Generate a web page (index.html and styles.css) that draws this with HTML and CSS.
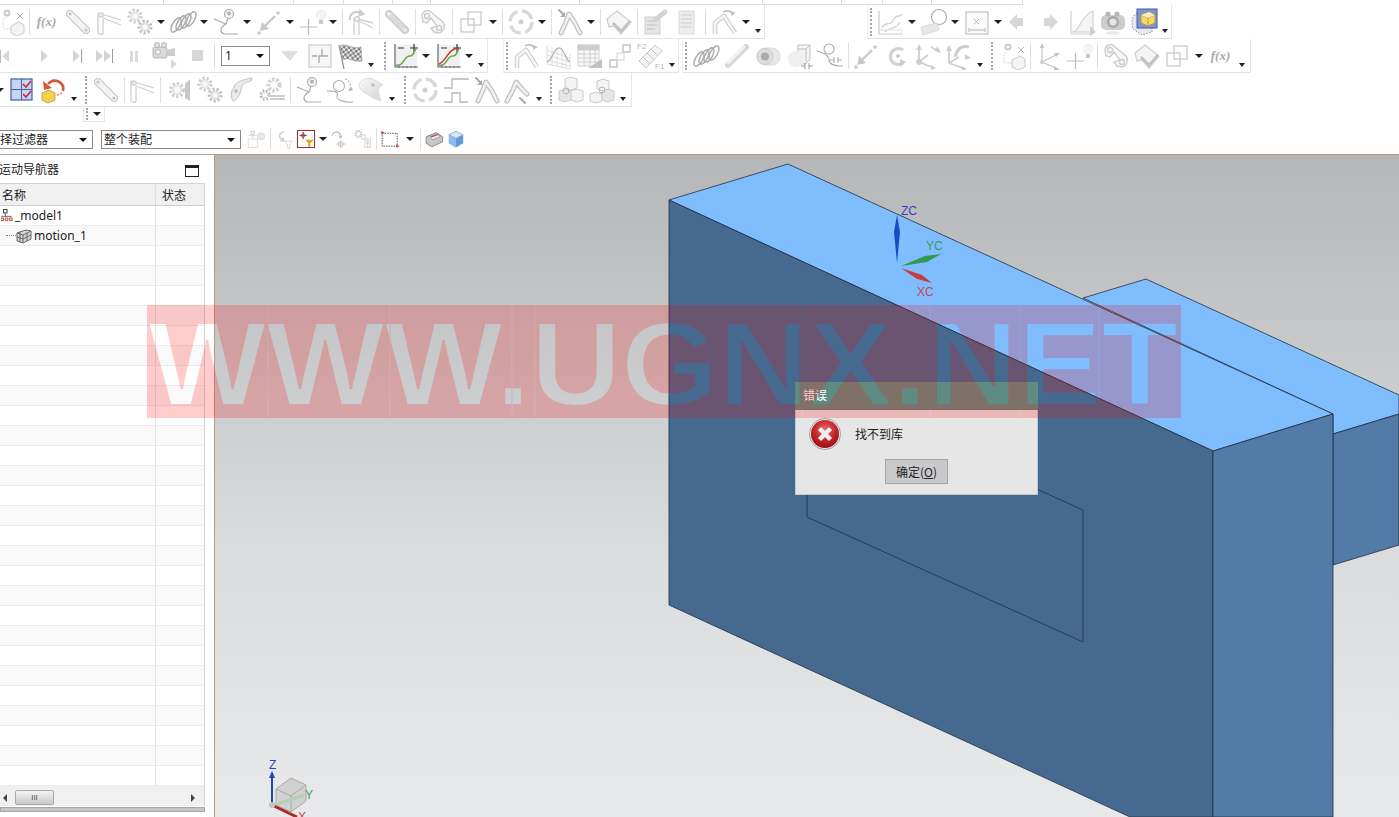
FILE: index.html
```html
<!DOCTYPE html>
<html lang="zh">
<head>
<meta charset="utf-8">
<title>运动导航器</title>
<link rel="stylesheet" href="styles.css">
</head>
<body>
<svg class="defs" aria-hidden="true">
<defs>
<pattern id="chk" width="5" height="5" patternUnits="userSpaceOnUse" patternTransform="rotate(8)"><rect width="5" height="5" fill="#eee"/><rect width="2.5" height="2.5" fill="#777"/><rect x="2.5" y="2.5" width="2.5" height="2.5" fill="#777"/></pattern>
<linearGradient id="gsurf" x1="0" y1="0" x2="1" y2="1"><stop offset="0" stop-color="#f6f6f6"/><stop offset="1" stop-color="#c4c4c4"/></linearGradient>
<radialGradient id="gerr" cx=".5" cy=".35" r=".7"><stop offset="0" stop-color="#e8686a"/><stop offset=".6" stop-color="#c02024"/><stop offset="1" stop-color="#8a0f12"/></radialGradient>
<symbol id="link" viewBox="0 0 28 28"><path d="M6 6L22 22" stroke="#b4b4b4" stroke-width="8" stroke-linecap="round"/><path d="M6 6L22 22" stroke="#efefef" stroke-width="5.5" stroke-linecap="round"/><circle cx="6" cy="6" r="1.5" fill="#aaa"/><circle cx="22" cy="22" r="1.5" fill="#aaa"/></symbol>
<symbol id="linkd" viewBox="0 0 28 28"><path d="M6 6L22 22" stroke="#b8b8b8" stroke-width="8" stroke-linecap="round"/><path d="M6 6L22 22" stroke="#cfcfcf" stroke-width="5" stroke-linecap="round"/><circle cx="6" cy="6" r="1.5" fill="#eee"/><circle cx="22" cy="22" r="1.5" fill="#eee"/></symbol>
<symbol id="strut" viewBox="0 0 28 28" fill="none" stroke="#bcbcbc" stroke-width="1.3"><path d="M3 26V5M8 26V11M3 5L26 12M8 10L26 17M4 26H8"/><circle cx="6" cy="7" r="2.2" fill="#eee"/></symbol>
<symbol id="rotlink" viewBox="0 0 28 28" fill="none" stroke="#bcbcbc" stroke-width="1.3"><path d="M7 27V10M12 27V14M7 10L26 15M12 13L26 20"/><circle cx="10" cy="11" r="2.4" fill="#eee"/><path d="M3 12C2 6 8 2 14 5" stroke-width="2.2"/><path d="M13 2L17 6L12 8Z" fill="#bbb"/></symbol>
<symbol id="gears" viewBox="0 0 28 28" fill="none"><circle cx="9" cy="8" r="5.5" stroke="#bdbdbd" stroke-width="4" stroke-dasharray="2.2 1.6"/><circle cx="9" cy="8" r="3.6" stroke="#ddd" stroke-width="2" fill="#f6f6f6"/><circle cx="19" cy="19" r="5.5" stroke="#adadad" stroke-width="4" stroke-dasharray="2.2 1.6"/><circle cx="19" cy="19" r="3.6" stroke="#d4d4d4" stroke-width="2" fill="#f6f6f6"/></symbol>
<symbol id="spring" viewBox="0 0 28 28" fill="none" stroke="#8e8e8e" stroke-width="1.5"><ellipse cx="7" cy="17" rx="3.5" ry="8" transform="rotate(30 7 17)"/><ellipse cx="12" cy="15" rx="3.5" ry="8" transform="rotate(30 12 15)"/><ellipse cx="17" cy="13" rx="3.5" ry="8" transform="rotate(30 17 13)"/><ellipse cx="22" cy="11" rx="3.5" ry="8" transform="rotate(30 22 11)"/></symbol>
<symbol id="pin" viewBox="0 0 28 28" fill="none" stroke="#8c8c8c" stroke-width="1.2"><circle cx="17" cy="6" r="4.5" fill="#f2f2f2"/><circle cx="17" cy="5.5" r="1.3" fill="#aaa"/><path d="M2 11L14 16C8 19 7 25 13 26H26M16 10L14 16"/></symbol>
<symbol id="arrowp" viewBox="0 0 28 28" fill="none" stroke="#b4b4b4" stroke-width="2.4"><path d="M20 8L9 19"/><path d="M5 23L7 14L14 21Z" fill="#b4b4b4" stroke="none"/><circle cx="23" cy="5" r="1.8" fill="#b4b4b4" stroke="none"/><circle cx="4" cy="25" r="1.8" fill="#b4b4b4" stroke="none"/></symbol>
<symbol id="plusbulb" viewBox="0 0 28 28" fill="none" stroke="#a4a4a4" stroke-width="1.2"><path d="M2 19H19M10.500 11V27"/><circle cx="23" cy="7" r="4.500" fill="#f2f2f2" stroke="#e4e4e4"/><rect x="21" y="12" width="4" height="4" fill="#b4b4b4" stroke="none"/></symbol>
<symbol id="claw" viewBox="0 0 28 28" fill="#f6f6f6" stroke="#bbb" stroke-width="1.4"><path d="M3 8C3 3 9 1 12 4L24 14C27 18 25 24 20 25L15 24L12 20L18 18L12 10L8 15L4 14Z"/><circle cx="8" cy="8" r="2.500"/><circle cx="20" cy="20" r="2.500"/></symbol>
<symbol id="wave" viewBox="0 0 28 28" stroke="#bdbdbd" stroke-width="1.300" fill="#f2f2f2"><path d="M2 11L12 3L26 14L16 26L9 18L4 19Z"/><path d="M8 15L16 23L25 13" fill="none" stroke="#aaa" stroke-width="2.600"/></symbol>
<symbol id="copies" viewBox="0 0 28 28" fill="none" stroke="#b6b6b6" stroke-width="1.300"><rect x="3" y="11" width="13" height="13"/><rect x="10" y="4" width="13" height="13"/></symbol>
<symbol id="dashc" viewBox="0 0 28 28" fill="none"><circle cx="14" cy="14" r="11" stroke="#cacaca" stroke-width="3.500" stroke-dasharray="13 4.500"/><circle cx="14" cy="14" r="2.500" fill="#bbb"/></symbol>
<symbol id="robot" viewBox="0 0 28 28" fill="none" stroke-linecap="round" stroke-linejoin="round"><path d="M5 25L10 14L13 6L19 15L24 25" stroke="#aaa" stroke-width="5"/><path d="M5 25L10 14L13 6L19 15L24 25" stroke="#ececec" stroke-width="2.500"/><path d="M3 2L8 7" stroke="#888" stroke-width="2"/><path d="M9 9L9 4L4 9Z" fill="#888"/></symbol>
<symbol id="robot2" viewBox="0 0 28 28" fill="none" stroke-linecap="round" stroke-linejoin="round"><path d="M3 25L9 14L12 6L18 13L23 18" stroke="#aaa" stroke-width="5"/><path d="M3 25L9 14L12 6L18 13L23 18" stroke="#ececec" stroke-width="2.500"/><path d="M16 22L21 27" stroke="#888" stroke-width="2"/></symbol>
<symbol id="note" viewBox="0 0 28 28" stroke="#bbb"><rect x="4" y="9" width="15" height="17" fill="#dcdcdc"/><path d="M6 13H16M6 17H16M6 21H14" stroke="#aaa"/><path d="M15 11L24 4" stroke="#c4c4c4" stroke-width="5" stroke-linecap="round"/></symbol>
<symbol id="doc" viewBox="0 0 28 28" stroke="#bbb"><rect x="7" y="3" width="15" height="23" fill="#e6e6e6" stroke="#ccc"/><path d="M9 7H20M9 11H20M9 15H20M9 19H20"/></symbol>
<symbol id="roboa" viewBox="0 0 28 28" fill="none" stroke-linejoin="round"><path d="M4 26V15L13 8L24 25" stroke="#b4b4b4" stroke-width="4.500"/><path d="M4 26V15L13 8L24 25" stroke="#f4f4f4" stroke-width="2.500"/><path d="M12 4Q18 1 22 6" stroke="#aaa" stroke-width="1.500"/><path d="M20 8L25 5L20 3Z" fill="#aaa"/></symbol>
<symbol id="chart" viewBox="0 0 28 28" fill="none" stroke="#b8b8b8" stroke-width="1.200"><path d="M2 3V26H26"/><path d="M5 20C9 12 13 20 17 11C19 6 23 10 25 6M8 24C12 18 18 23 23 14" /><path d="M2 22H26" stroke="#ddd"/></symbol>
<symbol id="circn" viewBox="0 0 28 28"><circle cx="19" cy="9" r="7.500" fill="none" stroke="#8c8c8c" stroke-width="1.200"/><path d="M1 19L17 15L19 22L3 27Z" fill="#e0e0e0" stroke="#ccc"/></symbol>
<symbol id="boxx" viewBox="0 0 28 28"><rect x="3" y="4" width="22" height="22" fill="#fafafa" stroke="#aaa" stroke-width="1.200"/><path d="M6 20V24M22 20V24M6 22H22" stroke="#999" fill="none"/><path d="M11 11L16 16M16 11L11 16" stroke="#999"/></symbol>
<symbol id="back" viewBox="0 0 28 28"><path d="M3 14L11 6V10H17V18H11V22Z" fill="#c8c8c8"/></symbol>
<symbol id="fwd" viewBox="0 0 28 28"><path d="M21 14L13 6V10H7V18H13V22Z" fill="#c8c8c8"/></symbol>
<symbol id="cchart" viewBox="0 0 28 28" fill="none" stroke="#c0c0c0" stroke-width="1.200"><path d="M3 3V26H25"/><path d="M4 24C12 24 12 8 25 3V24Z" fill="#f2f2f2"/><path d="M22 18L28 24L22 28Z" fill="#bbb" stroke="none"/></symbol>
<symbol id="camera" viewBox="0 0 28 28"><rect x="2" y="7" width="24" height="15" rx="5" fill="#bbb"/><circle cx="9" cy="6" r="2.500" fill="#999"/><circle cx="18" cy="6" r="2.500" fill="#999"/><circle cx="14" cy="14" r="6" fill="#888"/><circle cx="14" cy="14" r="3.500" fill="#ddd"/><ellipse cx="14" cy="25" rx="7" ry="2" fill="#e4e4e4"/></symbol>
<symbol id="cubec" viewBox="0 0 28 28"><path d="M7 5C2 8 1 14 3 21L12 27L22 24V18" fill="#e6eaf0" stroke="#889" stroke-dasharray="1.500 1.500"/><rect x="7" y="1" width="20" height="19" fill="#7c94d4" stroke="#445a9c"/><path d="M11 7L19 4L25 7V15L18 18L11 15Z" fill="#f4d76a" stroke="#b89a3c"/><path d="M11 7L18 10L25 7M18 10V18" fill="none" stroke="#b89a3c"/><path d="M11 7L19 4L25 7L18 10Z" fill="#fbeeb4"/></symbol>
<symbol id="prev" viewBox="0 0 28 28"><rect width="1" x="0" y="8" height="13" fill="#999"/><path d="M2 14L9 8V20Z" fill="#c8c8c8"/></symbol>
<symbol id="play" viewBox="0 0 28 28"><path d="M11 8L18 14L11 20Z" fill="#c4c4c4"/></symbol>
<symbol id="next" viewBox="0 0 28 28"><path d="M13 8L20 14L13 20Z" fill="#c4c4c4"/><rect x="21" y="7" width="1" height="14" fill="#777"/></symbol>
<symbol id="last" viewBox="0 0 28 28"><path d="M6 8L13 14L6 20ZM14 8L21 14L14 20Z" fill="#c4c4c4"/><rect x="22" y="7" width="1" height="14" fill="#777"/></symbol>
<symbol id="pause" viewBox="0 0 28 28"><path d="M10 9H13V20H10ZM15 9H18V20H15Z" fill="#ccc"/></symbol>
<symbol id="cam" viewBox="0 0 28 28"><rect x="3" y="5" width="14" height="11" rx="2" fill="#ccc" stroke="#999"/><circle cx="7" cy="3" r="2.500" fill="#ddd" stroke="#999"/><circle cx="14" cy="3" r="2.500" fill="#ddd" stroke="#999"/><circle cx="8" cy="10" r="2.500" fill="#eee" stroke="#999"/><path d="M17 8L25 6V14L17 14Z" fill="#bbb"/><path d="M21 17L27 22L21 27Z" fill="#c8c8c8"/></symbol>
<symbol id="stop" viewBox="0 0 28 28"><rect x="12" y="8" width="11" height="11" fill="#c8c8c8"/></symbol>
<symbol id="tri" viewBox="0 0 28 28"><path d="M5 9H22L14 19Z" fill="#d0d0d0"/></symbol>
<symbol id="stepb" viewBox="0 0 28 28" fill="none"><rect x="3" y="3" width="22" height="22" fill="#f6f6f6" stroke="#bbb" stroke-width="1.300"/><path d="M6 14H11M13 21V14H16V7M16 14H22" stroke="#888" stroke-width="1.300"/></symbol>
<symbol id="flag" viewBox="0 0 28 28"><path d="M4 4C10 0 15 8 25 5L26 19C17 21 13 14 7 18Z" fill="url(#chk)" stroke="#999" stroke-width=".6"/><path d="M3 3L8 27" stroke="#888" stroke-width="1.200"/></symbol>
<symbol id="chartg" viewBox="0 0 28 28" fill="none"><rect x="4" y="3" width="22" height="22" fill="#f0f0f0" stroke="none"/><path d="M4 2V25H27" stroke="#667" stroke-width="1.200"/><path d="M7 6H13M19 6H27M23 2V10" stroke="#333" stroke-width="1.200"/><path d="M5 23C13 25 13 13 19 14C23 14 23 9 25 7" stroke="#6aa84f" stroke-width="1.500"/><path d="M8 24V26M12 24V26M16 24V26M20 24V26M24 24V26" stroke="#667"/></symbol>
<symbol id="chartr" viewBox="0 0 28 28" fill="none"><rect x="4" y="3" width="22" height="22" fill="#f0f0f0" stroke="none"/><path d="M4 2V25H27" stroke="#667" stroke-width="1.200"/><path d="M7 6H13M19 6H27M23 2V10" stroke="#333" stroke-width="1.200"/><path d="M5 23C13 25 13 13 19 14C23 14 23 9 25 7" stroke="#6aa84f" stroke-width="1.500"/><path d="M5 22C12 20 14 6 25 6" stroke="#c83a3a" stroke-width="1.500"/><path d="M8 24V26M12 24V26M16 24V26M20 24V26M24 24V26" stroke="#667"/></symbol>
<symbol id="mesh" viewBox="0 0 28 28" fill="none" stroke="#c4c4c4" stroke-width=".8"><path d="M3 3V22L26 27V12M3 8L26 16M3 13L26 20M3 18L26 24M8 5V23M13 7V24M18 9V25M22 11V26"/><path d="M3 20C9 18 10 4 16 6C20 8 22 18 26 20" stroke="#999" stroke-width="1.300"/></symbol>
<symbol id="table" viewBox="0 0 28 28" fill="none" stroke="#c0c0c0"><rect x="3" y="3" width="21" height="21" fill="#f4f4f4"/><rect x="3" y="3" width="21" height="5" fill="#bbb"/><path d="M3 12H24M3 16H24M3 20H24M9 3V24M15 3V24M20 3V24"/><path d="M13 26L27 17V26Z" fill="#aaa" stroke="none"/></symbol>
<symbol id="squares" viewBox="0 0 28 28" fill="none" stroke="#9c9c9c" stroke-width="1.200"><rect x="4" y="18" width="7" height="7"/><rect x="11" y="11" width="7" height="7" stroke="#ccc"/><rect x="17" y="3" width="7" height="7"/></symbol>
<symbol id="conv" viewBox="0 0 28 28" fill="none" stroke="#b4b4b4"><path d="M2 19L18 3L25 9L9 26Z" fill="#efefef"/><path d="M6 15L13 22M10 11L17 18M14 7L21 14"/><text x="0" y="7" class="svgt">F2</text><text x="18" y="27" class="svgt">F1</text></symbol>
<symbol id="cyl" viewBox="0 0 28 28" fill="none" stroke-linecap="round"><path d="M5 23L23 5" stroke="#c8c8c8" stroke-width="6"/><path d="M5 21L21 5" stroke="#eee" stroke-width="2.500"/></symbol>
<symbol id="bush" viewBox="0 0 28 28"><rect x="3" y="6" width="23" height="17" rx="8" fill="#e0e0e0" stroke="#ccc"/><circle cx="11" cy="14.500" r="8" fill="#d0d0d0" stroke="#bbb"/><circle cx="11" cy="14.500" r="4" fill="#8c8c8c"/></symbol>
<symbol id="cubes" viewBox="0 0 28 28" fill="none"><path d="M13 3H25V17L21 22H13Z" fill="#f0f0f0" stroke="#aaa"/><path d="M21 7V20M21 7L25 3M13 7H21" stroke="#aaa"/><circle cx="11" cy="17" r="8" fill="#eaeaea"/><path d="M16 24H20M24 24H28M20 21V27M24 21V27" stroke="#777"/></symbol>
<symbol id="curvec" viewBox="0 0 28 28" fill="none" stroke="#8c8c8c" stroke-width="1.100"><circle cx="13" cy="7" r="5"/><path d="M1 9C6 10 13 13 13 18C13 21 17 24 27 24"/><path d="M14 18H18M22 18H26M18 15V21M22 15V21"/></symbol>
<symbol id="circa" viewBox="0 0 28 28" fill="none"><path d="M20 8A8 8 0 1 0 20 21" stroke="#c0c0c0" stroke-width="3.200"/><circle cx="15" cy="14" r="1.800" fill="#aaa"/><path d="M17 17L23 20L17 25Z" fill="#bbb"/></symbol>
<symbol id="axes" viewBox="0 0 28 28" fill="none" stroke="#bbb" stroke-width="1.800"><path d="M5 20V5M5 20L14 13M5 20L20 26M17 5L26 10"/><path d="M5 2L2 8H8ZM22 26L17 23V28ZM27 11L21 9L23 4Z" fill="#bbb" stroke="none"/><circle cx="5" cy="20" r="2" fill="#bbb"/></symbol>
<symbol id="axes2" viewBox="0 0 28 28" fill="none" stroke="#bbb" stroke-width="1.800"><path d="M4 21V6M4 21L14 15M4 21L20 27"/><path d="M10 15C12 6 18 3 24 5" stroke-width="3"/><path d="M4 3L1 9H7ZM22 27L17 24V29ZM20 18L26 16L20 12Z" fill="#bbb" stroke="none"/></symbol>
<symbol id="jt" viewBox="0 0 28 28" fill="none" stroke="#b8b8b8"><circle cx="10" cy="5" r="2.500" stroke-width="2"/><path d="M9 7L6 13V21H14" stroke-dasharray="1.500 1.500"/><path d="M14 18L22 14L27 17V25L20 28L14 25Z" fill="#f0f0f0"/><path d="M20 5L26 11M26 5L20 11" stroke="#999"/></symbol>
<symbol id="axes3" viewBox="0 0 28 28" fill="none" stroke="#aaa" stroke-width="1.100"><path d="M8 20V3M8 20L24 12M8 20L24 27"/><path d="M8 1L6 6H10ZM26 11L20 11L22 15ZM26 28L20 24L20 28Z" fill="#aaa" stroke="none"/><circle cx="8" cy="20" r="2" fill="#bbb" stroke="none"/></symbol>
<symbol id="gridc" viewBox="0 0 28 28" fill="none"><rect x="3" y="3" width="21" height="21" fill="#c6d4f2" stroke="#3f5fb0" stroke-width="1.200"/><path d="M13.500 3V24M3 13.500H24" stroke="#3f5fb0"/><path d="M15 8L18 11L23 5M15 18L18 21L23 15" stroke="#c62f3a" stroke-width="1.600"/></symbol>
<symbol id="undoc" viewBox="0 0 28 28" fill="none"><path d="M24 15C26 6 15 1 9 8" stroke="#d2593b" stroke-width="2.600"/><path d="M4 5L13 12L5 14Z" fill="#d2593b"/><path d="M3 17L10 14L16 17V24L9 27L3 24Z" fill="#f2d24c" stroke="#b99a30" stroke-width=".8"/><path d="M18 19L23 17" stroke="#e28a30" stroke-width="1.600" stroke-dasharray="2 1.500"/></symbol>
<symbol id="gearw" viewBox="0 0 28 28" fill="none"><circle cx="12" cy="14" r="6" stroke="#bdbdbd" stroke-width="4" stroke-dasharray="2.200 1.700"/><circle cx="12" cy="14" r="4" stroke="#ddd" stroke-width="2" fill="#f8f8f8"/><path d="M20 8L25 3V25L20 22Z" fill="#b4b4b4"/></symbol>
<symbol id="camg" viewBox="0 0 28 28" fill="none"><path d="M7 11C9 5 16 4 25 2L24 5C18 6 15 8 14 13C13 19 10 24 6 25C3 21 4 15 7 11Z" fill="#e4e4e4" stroke="#aaa"/><circle cx="9" cy="15" r="2" fill="#aaa"/></symbol>
<symbol id="gearb" viewBox="0 0 28 28" fill="none"><circle cx="16" cy="9" r="5.500" stroke="#bdbdbd" stroke-width="4" stroke-dasharray="2.200 1.700"/><circle cx="7" cy="19" r="4" stroke="#a4a4a4" stroke-width="3.500" stroke-dasharray="1.800 1.400"/><path d="M10 20H27M12 23H27" stroke="#bbb" stroke-width="2"/></symbol>
<symbol id="curve2" viewBox="0 0 28 28" fill="none" stroke="#8c8c8c" stroke-width="1.100"><circle cx="13" cy="10" r="5.500"/><path d="M1 15C7 15 13 15 11 20C10 24 20 27 27 26"/><path d="M19 3C23 4 25 8 24 12" stroke-dasharray="2 1.500"/><path d="M22 15L25 11L27 14Z" fill="#8c8c8c" stroke="none"/></symbol>
<symbol id="surf" viewBox="0 0 28 28"><path d="M2 10C2 4 10 1 16 3L26 9C21 10 20 14 24 25L16 22C12 18 5 18 2 10Z" fill="url(#gsurf)" stroke="#ccc"/><circle cx="16" cy="9" r="1.800" fill="#aaa"/></symbol>
<symbol id="stepw" viewBox="0 0 28 28" fill="none" stroke="#b4b4b4" stroke-width="1.800"><path d="M2 12H10V3H27M2 26H10V17H18V26H26"/></symbol>
<symbol id="blocks" viewBox="0 0 28 28" fill="#efefef" stroke="#b8b8b8"><path d="M8 3L14 1L20 3V12L14 14L8 12Z"/><path d="M2 15L8 13L14 15V24L8 26L2 24Z" fill="#ddd"/><path d="M14 15L20 13L26 15V24L20 26L14 24Z"/><circle cx="9" cy="15" r="3" fill="none" stroke="#999"/></symbol>
<symbol id="blocks2" viewBox="0 0 28 28" fill="#efefef" stroke="#b8b8b8"><path d="M9 5L15 3L21 5V13L15 15L9 13Z"/><path d="M2 18L8 16L14 18V25L8 27L2 25Z"/><path d="M14 15L20 13L26 15V24L20 26L14 24Z" fill="#ddd"/><circle cx="14" cy="14" r="3" fill="none" stroke="#999"/></symbol>
<symbol id="asm" viewBox="0 0 28 28" fill="none" stroke="#bbb"><rect x="3" y="14" width="13" height="12"/><path d="M9 3V14M3 9H15"/><circle cx="21" cy="10" r="5" fill="#eee"/><circle cx="21" cy="10" r="2.500"/><rect x="7" y="3" width="5" height="5" fill="#eee"/></symbol>
<symbol id="undof" viewBox="0 0 28 28" fill="none" stroke="#bbb" stroke-width="1.800"><path d="M14 4C7 5 6 12 11 14"/><path d="M8 17L13 11L15 18Z" fill="#bbb" stroke="none"/><path d="M15 17H26L22 22V27H19V22Z" stroke-width="1"/></symbol>
<symbol id="target" viewBox="0 0 28 28" fill="none"><rect x="2" y="2" width="24" height="24" fill="#fbfbfb" stroke="#8a2a2a" stroke-width="1.400"/><path d="M10 4V14M5 9H15" stroke="#8a2a2a" stroke-width="1.300"/><circle cx="10" cy="9" r="2.500" stroke="#8a2a2a"/><path d="M13 15H25L20 20V25H17V20Z" fill="#e8a322"/></symbol>
<symbol id="rott" viewBox="0 0 28 28" fill="none" stroke="#aaa" stroke-width="1.300"><path d="M15 16V27M9 21H22"/><circle cx="15" cy="21" r="3.500"/><path d="M3 10C4 3 13 2 15 9" stroke-width="1.800"/><path d="M11 9L18 9L15 14Z" fill="#aaa" stroke="none"/></symbol>
<symbol id="gdoc" viewBox="0 0 28 28" fill="none"><circle cx="9" cy="7" r="4" stroke="#aaa" stroke-width="3" stroke-dasharray="1.800 1.300"/><circle cx="16" cy="11" r="3" stroke="#bbb" stroke-width="2.500" stroke-dasharray="1.600 1.200"/><rect x="18" y="14" width="8" height="12" fill="#f4f4f4" stroke="#bbb"/><path d="M20 17H24M20 20H24M22 14V26" stroke="#bbb"/></symbol>
<symbol id="dashr" viewBox="0 0 28 28" fill="none"><rect x="3" y="6" width="21" height="18" stroke="#333" stroke-dasharray="2 1.500" stroke-width="1.200"/><path d="M3 3V8M1 5H6M24 21V26M22 24H27" stroke="#c33" stroke-width="1.300"/></symbol>
<symbol id="boxg" viewBox="0 0 28 28"><path d="M3 11L17 5L26 11V18L11 25L3 20Z" fill="#c8c8c8" stroke="#666"/><path d="M8 11L18 7L23 11L12 15Z" fill="#eee" stroke="#888"/><path d="M10 11L19 8" stroke="#d04040" stroke-width="1.600"/></symbol>
<symbol id="cubeb" viewBox="0 0 28 28"><path d="M4 8L14 3L24 8V20L14 26L4 20Z" fill="#5c9ade"/><path d="M4 8L14 3L24 8L14 13Z" fill="#d6e6f4" stroke="#9ab"/><path d="M4 8L14 13V26L4 20Z" fill="#8fbde8"/></symbol>
<symbol id="assm" viewBox="0 0 14 16" fill="none"><rect x="3" y="1" width="4" height="4" stroke="#222"/><path d="M5 5V9M1 10V9H12V10" stroke="#555"/><path d="M0 11H3V14H0ZM5 11H8V14H5ZM10 11H13V14H10Z" stroke="#b03020"/></symbol>
<symbol id="motion" viewBox="0 0 16 16" stroke="#666" fill="#d8d8d8"><path d="M1 5L10 2L15 3V11L7 15L1 13Z"/><path d="M1 5L7 7V15M7 7L15 3M4 3.500V14M1 9L7 11M7 11L15 7M11 5V13" fill="none"/></symbol>
</defs>
</svg>

<div class="app">
  <div class="ribbon">
    <div class="tabs"><span class="t t1"></span><span class="t t2"></span><span class="t t3"></span><span class="t t4"></span><span class="t t5"></span><span class="t t6"></span><span class="t t7"></span><span class="t t8"></span><span class="t t9"></span><span class="t t10"></span><span class="t t11"></span></div>

    <div class="row">
      <div class="tb clip-a">
        <span class="ic"><svg><use href="#jt"/></svg></span><span class="sp"></span>
        <span class="ic fx">f(x)</span>
        <span class="ic"><svg><use href="#link"/></svg></span>
        <span class="ic"><svg><use href="#strut"/></svg></span>
        <span class="ic"><svg><use href="#gears"/></svg></span><span class="dd"></span>
        <span class="ic"><svg><use href="#spring"/></svg></span><span class="dd"></span>
        <span class="ic"><svg><use href="#pin"/></svg></span><span class="dd"></span>
        <span class="ic"><svg><use href="#arrowp"/></svg></span><span class="dd"></span>
        <span class="ic"><svg><use href="#plusbulb"/></svg></span><span class="dd"></span><span class="sp sa"></span>
        <span class="ic"><svg><use href="#rotlink"/></svg></span><span class="sp"></span>
        <span class="ic"><svg><use href="#linkd"/></svg></span><span class="sp"></span>
        <span class="ic"><svg><use href="#claw"/></svg></span><span class="sp sw"></span>
        <span class="ic"><svg><use href="#copies"/></svg></span><span class="dd"></span><span class="sp sa"></span>
        <span class="ic"><svg><use href="#dashc"/></svg></span><span class="dd"></span><span class="sp sa"></span>
        <span class="ic"><svg><use href="#robot"/></svg></span><span class="dd"></span><span class="sp sa"></span>
        <span class="ic"><svg><use href="#wave"/></svg></span><span class="sp"></span>
        <span class="ic"><svg><use href="#note"/></svg></span>
        <span class="ic"><svg><use href="#doc"/></svg></span><span class="sp sw"></span>
        <span class="ic"><svg><use href="#roboa"/></svg></span><span class="dd"></span><span class="dm"></span>
      </div>
      <div class="tb after-a">
        <span class="grip"></span>
        <span class="ic"><svg><use href="#chart"/></svg></span><span class="dd"></span>
        <span class="ic"><svg><use href="#circn"/></svg></span><span class="dd"></span>
        <span class="ic"><svg><use href="#boxx"/></svg></span><span class="dd"></span>
        <span class="ic"><svg><use href="#back"/></svg></span>
        <span class="ic"><svg><use href="#fwd"/></svg></span>
        <span class="ic"><svg><use href="#cchart"/></svg></span>
        <span class="ic"><svg><use href="#camera"/></svg></span>
        <span class="ic"><svg class="on"><use href="#cubec"/></svg></span><span class="dm"></span>
      </div>
    </div>

    <div class="row">
      <div class="tb clip-b">
        <span class="ic n"><svg><use href="#prev"/></svg></span>
        <span class="ic n"><svg><use href="#play"/></svg></span>
        <span class="ic n"><svg><use href="#next"/></svg></span>
        <span class="ic n"><svg><use href="#last"/></svg></span>
        <span class="ic n"><svg><use href="#pause"/></svg></span>
        <span class="ic n"><svg><use href="#cam"/></svg></span>
        <span class="ic n"><svg><use href="#stop"/></svg></span><span class="sp s10"></span>
        <span class="sel sel-step">1</span>
        <span class="ic n"><svg><use href="#tri"/></svg></span>
        <span class="ic n"><svg><use href="#stepb"/></svg></span>
        <span class="ic n"><svg class="on"><use href="#flag"/></svg></span><span class="dm"></span><span class="st"></span>
      </div>
      <div class="tb">
        <span class="grip"></span>
        <span class="ic"><svg class="on"><use href="#chartg"/></svg></span><span class="dd"></span>
        <span class="ic"><svg class="on"><use href="#chartr"/></svg></span><span class="dd"></span><span class="dm"></span>
      </div>
      <div class="tb after-b1">
        <span class="grip"></span>
        <span class="ic"><svg><use href="#roboa"/></svg></span>
        <span class="ic"><svg><use href="#mesh"/></svg></span>
        <span class="ic"><svg><use href="#table"/></svg></span>
        <span class="ic"><svg><use href="#squares"/></svg></span>
        <span class="ic"><svg><use href="#conv"/></svg></span><span class="dm"></span>
      </div>
      <div class="tb after-b2">
        <span class="grip"></span>
        <span class="ic"><svg><use href="#spring"/></svg></span>
        <span class="ic"><svg><use href="#cyl"/></svg></span>
        <span class="ic"><svg><use href="#bush"/></svg></span>
        <span class="ic"><svg><use href="#cubes"/></svg></span>
        <span class="ic"><svg><use href="#curvec"/></svg></span><span class="sp"></span>
        <span class="ic"><svg><use href="#arrowp"/></svg></span>
        <span class="ic"><svg><use href="#circa"/></svg></span>
        <span class="ic"><svg><use href="#axes"/></svg></span>
        <span class="ic"><svg><use href="#axes2"/></svg></span><span class="dm"></span><span class="st"></span>
        <span class="grip gl"></span>
        <span class="ic"><svg><use href="#jt"/></svg></span><span class="sp"></span>
        <span class="ic"><svg><use href="#axes3"/></svg></span>
        <span class="ic"><svg><use href="#plusbulb"/></svg></span><span class="sp sa"></span>
        <span class="ic"><svg><use href="#claw"/></svg></span>
        <span class="ic"><svg><use href="#wave"/></svg></span>
        <span class="ic"><svg><use href="#copies"/></svg></span><span class="dd"></span>
        <span class="ic fx">f(x)</span><span class="dm dw"></span>
      </div>
    </div>

    <div class="row">
      <div class="tb clip-c">
        <span class="dd"></span>
        <span class="ic"><svg class="on"><use href="#gridc"/></svg></span>
        <span class="ic"><svg class="on"><use href="#undoc"/></svg></span><span class="dm"></span><span class="st"></span>
        <span class="grip gl"></span>
        <span class="ic"><svg><use href="#link"/></svg></span><span class="sp"></span>
        <span class="ic"><svg><use href="#strut"/></svg></span><span class="sp sa"></span>
        <span class="ic"><svg><use href="#gearw"/></svg></span>
        <span class="ic"><svg><use href="#gears"/></svg></span>
        <span class="ic"><svg><use href="#camg"/></svg></span>
        <span class="ic"><svg><use href="#gearb"/></svg></span><span class="sp sa"></span>
        <span class="ic"><svg><use href="#pin"/></svg></span>
        <span class="ic"><svg><use href="#curve2"/></svg></span>
        <span class="ic"><svg><use href="#surf"/></svg></span><span class="dm"></span><span class="st s4"></span>
        <span class="grip gl"></span>
        <span class="ic"><svg><use href="#dashc"/></svg></span>
        <span class="ic"><svg><use href="#stepw"/></svg></span>
        <span class="ic"><svg><use href="#robot"/></svg></span>
        <span class="ic"><svg><use href="#robot2"/></svg></span><span class="dm"></span><span class="st"></span>
        <span class="grip gl"></span>
        <span class="ic"><svg><use href="#blocks"/></svg></span>
        <span class="ic"><svg><use href="#blocks2"/></svg></span><span class="dm dw"></span>
      </div>
    </div>

    <div class="row4"><div class="mini"><span class="grip gs"></span><span class="dd ds"></span></div></div>

    <div class="filter">
      <span class="sel sel-a">选择过滤器</span>
      <span class="sel sel-b">整个装配</span>
      <span class="fi"><svg><use href="#asm"/></svg></span><span class="sp sf"></span>
      <span class="fi"><svg><use href="#undof"/></svg></span>
      <span class="fi"><svg class="on"><use href="#target"/></svg></span><span class="dd"></span>
      <span class="fi"><svg><use href="#rott"/></svg></span>
      <span class="fi"><svg><use href="#gdoc"/></svg></span><span class="sp sf"></span>
      <span class="fi"><svg class="on"><use href="#dashr"/></svg></span><span class="dd dn"></span><span class="sp sf"></span>
      <span class="fi"><svg class="on"><use href="#boxg"/></svg></span>
      <span class="fi"><svg class="on"><use href="#cubeb"/></svg></span>
    </div>
  </div>

  <div class="main">
    <aside class="panel">
      <div class="ptitle"><span>运动导航器</span><span class="maxbox"></span></div>
      <div class="grid">
        <div class="ghead"><span class="c1">名称</span><span class="c2">状态</span></div>
        <div class="grow"><span class="c1"><svg class="ti"><use href="#assm"/></svg>_model1</span><span class="c2"></span></div>
        <div class="grow alt"><span class="c1"><span class="dots"></span><svg class="tm"><use href="#motion"/></svg>motion_1</span><span class="c2"></span></div>
        <div class="gfill"></div>
        <div class="hscroll"><span class="al"></span><span class="thumb">III</span><span class="ar"></span></div>
      </div>
      <div class="pfoot"></div>
    </aside>

    <section class="view">
      <svg class="scene" viewBox="215 155 1184 662" preserveAspectRatio="none">
        <g stroke="#20303f" stroke-width=".8" stroke-linejoin="round">
          <path d="M1083 298L1146 279L1399 395V414L1333 434V414Z" fill="#7fbdff"/>
          <path d="M1333 434L1399 414V545L1333 565Z" fill="#527ba7"/>
          <path d="M669 200L788 164L1333 414L1213 451Z" fill="#7fbdff"/>
          <path d="M669 200L1213 451V817H1130L669 605Z" fill="#466a8f"/>
          <path d="M1213 451L1333 414V817H1213Z" fill="#527ba7"/>
          <path d="M807 385L1083 510V642L807 517Z" fill="none"/>
        </g>
        <path d="M897 215L900 232L897 263L894 232Z" fill="#1c49c4"/>
        <path d="M901 266L925 256L941 254L927 262Z" fill="#2f9a4e"/>
        <path d="M901 268L922 275L932 283L917 279Z" fill="#c83c48"/>
        <text x="901" y="215" class="ax az">ZC</text>
        <text x="926" y="250" class="ax ay">YC</text>
        <text x="917" y="296" class="ax ax-x">XC</text>
        <g>
          <path d="M276 789L291 778L306 785V801L291 812L276 805Z" fill="#c8c8c8" fill-opacity=".75" stroke="#aaa"/>
          <path d="M276 789L291 796L306 785M291 796V812" fill="none" stroke="#aaa"/>
          <path d="M275 805L304 795" stroke="#b4d0b4" stroke-width="3"/>
          <path d="M272 805V775" stroke="#1c45b8" stroke-width="2"/>
          <path d="M272 771L269 778H275Z" fill="#1c45b8"/>
          <path d="M272 805L297 817" stroke="#b02a2a" stroke-width="3"/>
          <circle cx="272" cy="805" r="3" fill="#c4c4c4"/>
          <text x="269" y="769" class="ax az">Z</text>
          <text x="305" y="799" class="ax ay">Y</text>
          <text x="298" y="821" class="ax ax-x">X</text>
        </g>
      </svg>
    </section>
  </div>

  <div class="dialog">
    <div class="dtitle">错误</div>
    <div class="dbody">
      <div class="dmsg">
        <svg class="erricon" viewBox="0 0 32 32"><circle cx="16" cy="16" r="15.500" fill="#eee" stroke="#8c8c8c" stroke-width=".8"/><circle cx="16" cy="16" r="14" fill="url(#gerr)"/><path d="M10.500 10.500L21.500 21.500M21.500 10.500L10.500 21.500" stroke="#eee" stroke-width="4.500"/></svg>
        <span>找不到库</span>
      </div>
      <button class="dbtn" type="button">确定(<u>O</u>)</button>
    </div>
  </div>

  <svg class="wm" viewBox="147 305 1034 113">
    <mask id="wmh" maskUnits="userSpaceOnUse" x="147" y="305" width="1034" height="113">
      <rect x="147" y="305" width="1034" height="113" fill="#fff"/>
      <text x="148" y="405" class="wmt" textLength="1030" lengthAdjust="spacingAndGlyphs">WWW.UGNX.NET</text>
      <path d="M268 305V418M390 305V418M512 305V418M535 305V418M710 305V418M802 305V418M930 305V418M1020 305V418M1099 305V418" stroke="#aaa"/>
    </mask>
    <rect x="147" y="305" width="1034" height="113" fill="#f00" fill-opacity=".2" mask="url(#wmh)"/>
  </svg>
</div>
</body>
</html>
```
FILE: styles.css
```css
html,body{margin:0;padding:0;background:#fff;overflow:hidden}
body{font-family:"Noto Sans","Noto Sans CJK SC",sans-serif;font-size:12px;color:#222}
.defs{position:absolute;width:0;height:0}
.app{position:relative;width:1399px;height:817px;overflow:hidden}

.ribbon{height:154px;overflow:hidden}
.tabs{display:flex;width:1023px;height:4px;border-bottom:1px solid #dcdcdc}
.t{border-right:1px solid #dcdcdc;box-sizing:border-box}
.t1{width:164px}.t2{width:130px}.t3{width:50px}.t4{width:49px}.t5{width:38px}.t6{width:150px}
.t7{width:183px}.t8{width:79px}.t9{width:41px}.t10{width:49px}.t11{width:91px}

.row{display:flex;height:34px}
.tb{display:flex;align-items:center;height:33px;border-bottom:1px solid #e2e2e2;border-right:1px solid #e6e6e6;flex:none}
.clip-a{margin-left:-5px}
.clip-b{margin-left:-1px;border-right:0}
.clip-c{margin-left:-6px}
.after-a{margin-left:102px;border-left:1px solid #f0f0f0}
.after-b1{margin-left:15px;border-left:1px solid #f0f0f0}
.after-b2{margin-left:3px;border-left:1px solid #f0f0f0}

.ic{flex:none;width:31px;height:28px;display:flex;align-items:center;justify-content:center}
.ic.n{width:30px}
.ic svg,.fi svg{display:block;opacity:.72;filter:blur(.3px)}
.ic svg{width:28px;height:28px}
.ic svg.on,.fi svg.on{opacity:1;filter:blur(.2px)}
.fx{font:italic bold 13px "Liberation Serif",serif;color:#a8a8a8}
.dd{flex:none;width:12px;height:8px;position:relative}
.dd::after,.dm::after{content:"";position:absolute;left:2px;top:2px;border-left:4px solid transparent;border-right:4px solid transparent;border-top:4px solid #222}
.dm{flex:none;width:12px;height:10px;position:relative;align-self:flex-end;margin-bottom:2px}
.dm::after{top:3px;left:3px;border-left-width:3.5px;border-right-width:3.5px}
.dw{width:14px}
.sp{flex:none;width:5px;height:26px;position:relative}
.sp::after{content:"";position:absolute;left:50%;top:0;bottom:0;border-left:1px solid #dedede}
.sa{width:6px}.sw{width:8px}.s10{width:10px}
.st{flex:none;width:5px}
.tb .st{width:3px}.tb .s4{width:4px}
.clip-b .st{width:5px}
.grip{flex:none;width:7px;height:28px;box-sizing:border-box;padding-left:2px;position:relative}
.grip::after{content:"";position:absolute;left:2px;top:0;bottom:0;border-left:2px dotted #a4a4a4}
.gs{height:12px}

.sel{flex:none;box-sizing:border-box;height:19px;border:1px solid #8a8a8a;background:#fff;display:flex;align-items:center;padding-left:2px;font-size:12px;line-height:17px;position:relative;color:#222}
.sel::after{content:"";position:absolute;right:5px;top:7px;border-left:4px solid transparent;border-right:4px solid transparent;border-top:4px solid #111}
.sel-step{width:49px;margin:0 5px 0 2px;height:20px;padding-left:3px}
.sel-a{width:108px;margin-left:-15px}
.sel-b{width:140px;margin-left:8px}

.row4{height:16px}
.mini{width:22px;height:15px;margin-left:83px;border:1px solid #e6e6e6;border-top:0;display:flex;align-items:center;box-sizing:border-box}
.ds{width:10px}
.filter{display:flex;align-items:center;height:31px;padding-top:1px;box-sizing:border-box}
.fi{flex:none;width:22px;height:22px;display:flex;align-items:center;justify-content:center}
.fi svg{width:20px;height:20px}
.filter .dd{width:12px}
.filter .dn{width:13px;margin-left:3px}
.sf{width:6px;height:22px}
.filter .sel-b + .fi{margin-left:4px}

.main{display:flex;height:663px}
.panel{width:214px;flex:none;border-top:1px solid #a8a8a8;box-sizing:border-box;background:#fff}
.ptitle{height:28px;display:flex;align-items:center;justify-content:space-between;padding-right:15px;font-size:12px;margin-left:-1px;box-sizing:border-box}
.maxbox{width:12px;height:8px;border:1px solid #222;border-top-width:3px;background:#fff;margin-top:4px}
.grid{width:205px;box-sizing:border-box;border-top:1px solid #d4d4d4;border-right:1px solid #d4d4d4}
.ghead{display:flex;background:#f0f0f0;border-bottom:1px solid #cfcfcf;align-items:center;box-sizing:border-box;height:22px}
.c1{flex:none;width:156px;box-sizing:border-box;height:100%;display:flex;align-items:center;border-right:1px solid #e0e0e0;padding-left:2px}
.c2{flex:1;padding-left:6px}
.grow{display:flex;height:20px;border-bottom:1px solid #ececec;box-sizing:border-box;align-items:center;font-size:12px}
.alt{background:#f9f9f9}
.ti{width:12px;height:15px;margin:0 2px 0 -1px;flex:none}
.tm{width:16px;height:16px;margin-right:2px;flex:none}
.dots{width:10px;margin-left:4px;border-top:1px dotted #888;flex:none}
.gfill{height:540px;background:linear-gradient(#e4e4e4,#e4e4e4) 155px 0/1px 100% no-repeat,repeating-linear-gradient(to bottom,#fff 0,#fff 19px,#ececec 19px,#ececec 20px,#f9f9f9 20px,#f9f9f9 39px,#ececec 39px,#ececec 40px)}
.hscroll{height:20px;background:#f0f0f0;display:flex;align-items:center;position:relative;box-sizing:border-box;padding-top:2px}
.al,.ar{position:absolute;top:8px;border-top:4px solid transparent;border-bottom:4px solid transparent}
.al{left:3px;border-right:4px solid #444}
.ar{right:9px;border-left:4px solid #444}
.thumb{margin-left:15px;width:39px;height:15px;box-sizing:border-box;border:1px solid #aaa;border-radius:2px;background:linear-gradient(#f4f4f4,#c8c8c8);font:8px/13px "Liberation Sans",sans-serif;text-align:center;color:#555}
.pfoot{width:205px;height:5px;margin-top:1px;background:#c4c4c4;border:1px solid #a8a8a8;box-sizing:border-box}

.view{flex:1;position:relative;border-top:1px solid #bd9874;border-left:1px solid #bd9874;background:linear-gradient(#b5b6b8 0,#c3c4c6 22%,#dbdcde 61%,#e8e9eb 100%);overflow:hidden}
.scene{position:absolute;left:0;top:0;width:100%;height:100%}
.ax{font:12px "Liberation Sans",sans-serif}
.az{fill:#3a3fc8}.ay{fill:#3a9a5f}.ax-x{fill:#d04050}
.svgt{font:8px "Liberation Sans",sans-serif;fill:#999;stroke:none}

.dialog{position:absolute;left:795px;top:382px;width:243px;height:113px;display:flex;flex-direction:column;z-index:1}
.dtitle{height:28px;background:#5f8c82;color:#fff;padding-left:8px;font-size:12px;line-height:28px}
.dbody{flex:1;background:#e6e6e6;border:1px solid #c8c8d0;border-top:0;display:flex;flex-direction:column;align-items:flex-end;box-sizing:border-box}
.dmsg{display:flex;align-self:stretch;align-items:center;height:47px;padding-left:13px;font-size:12px;box-sizing:border-box}
.dmsg span{margin-left:14px}
.erricon{width:32px;height:32px;flex:none}
.dbtn{width:63px;height:25px;margin:2px 89px 0 0;padding:0;background:#c9c9cb;border:1px solid #a8a6a2;font:12px "Noto Sans CJK SC","Noto Sans",sans-serif;color:#222}

.wm{position:absolute;left:147px;top:305px;width:1034px;height:113px;z-index:2;pointer-events:none}
.wmt{font:bold 118px "Liberation Sans",sans-serif;fill:#000;stroke:#fff;stroke-width:2px}
```
